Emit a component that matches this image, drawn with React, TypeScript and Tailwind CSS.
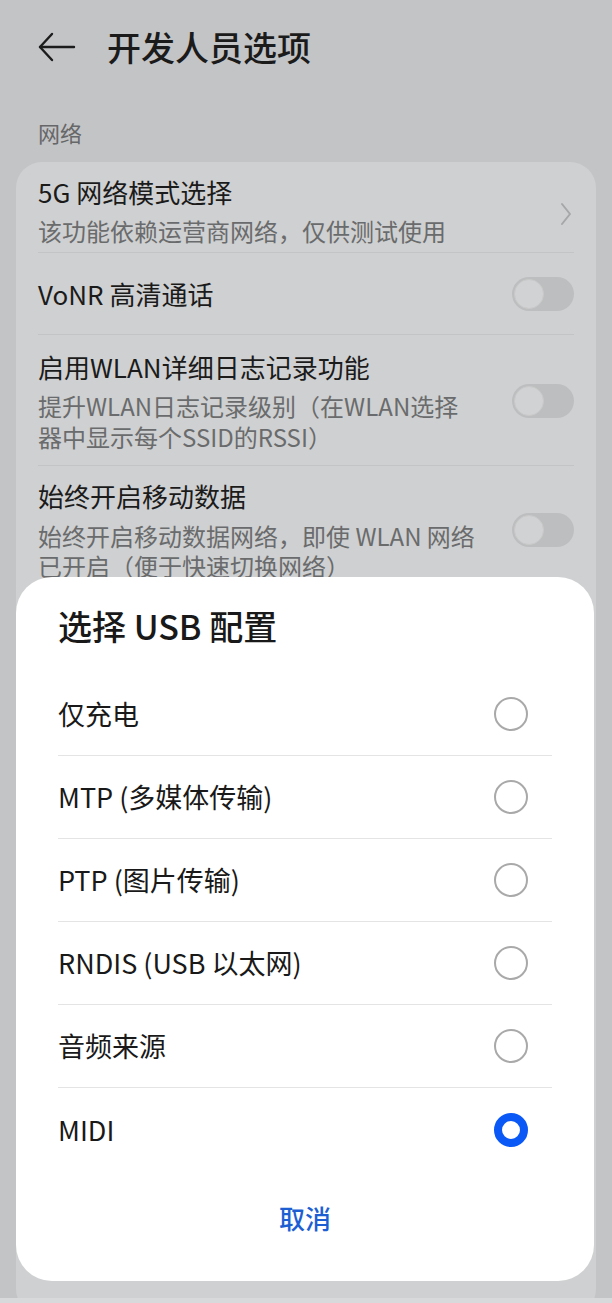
import React from "react";

const font = { fontFamily: '"Noto Sans CJK SC", "Noto Sans", sans-serif' };

function Toggle() {
  return (
    <div className="relative h-[34px] w-[62px] shrink-0 rounded-full bg-[#bdbebf]">
      <div className="absolute left-[2px] top-[2px] h-[30px] w-[30px] rounded-full border border-[#c9c9c9] bg-[#d1d2d3]" />
    </div>
  );
}

function Radio({ checked }: { checked?: boolean }) {
  if (checked) {
    return <div className="h-[34px] w-[34px] rounded-full border-[8px] border-[#0a59f7] bg-white" />;
  }
  return <div className="h-[34px] w-[34px] rounded-full border-2 border-[#a9a9a9] bg-white" />;
}

const options = ["仅充电", "MTP (多媒体传输)", "PTP (图片传输)", "RNDIS (USB 以太网)", "音频来源", "MIDI"];

export default function App() {
  return (
    <div className="relative h-[1303px] w-[612px] overflow-hidden bg-[#c3c4c6]" style={font}>
      {/* header */}
      <div className="flex h-[94px] items-center pl-[38px]">
        <svg width="38" height="30" viewBox="0 0 38 30" fill="none" stroke="#1c1c1c" strokeWidth="2.4" strokeLinecap="round" strokeLinejoin="round">
          <path d="M2 15H36" />
          <path d="M14 2L2 15L14 28" />
        </svg>
        <span className="ml-[31px] text-[34px] font-medium leading-[44px] text-[#1b1b1b]">开发人员选项</span>
      </div>

      <div className="mt-[23px] pl-[38px] text-[22px] leading-[30px] text-[#666768]">网络</div>

      {/* settings card */}
      <div className="mx-[16px] mt-[15px] rounded-[26px] bg-[#cfd0d1] px-[22px]">
        <div className="flex items-center justify-between border-b border-[#c3c4c5] pt-[13px] pb-[6px]">
          <div>
            <div className="text-[26px] leading-[34px] text-[#1b1b1b]">5G 网络模式选择</div>
            <div className="mt-[7px] text-[24px] leading-[30px] text-[#6a6b6c]">该功能依赖运营商网络，仅供测试使用</div>
          </div>
          <svg width="12" height="24" viewBox="0 0 12 24" fill="none" stroke="#a6a7a8" strokeWidth="2" strokeLinecap="round" strokeLinejoin="round" className="mr-[2px] mt-[6px]">
            <path d="M2 2L10 12L2 22" />
          </svg>
        </div>

        <div className="flex h-[82px] items-center justify-between border-b border-[#c3c4c5]">
          <div className="text-[26px] leading-[34px] text-[#1b1b1b]">VoNR 高清通话</div>
          <Toggle />
        </div>

        <div className="flex items-center justify-between border-b border-[#c3c4c5] pt-[15px] pb-[13px]">
          <div className="w-[441px]">
            <div className="text-[26px] leading-[34px] text-[#1b1b1b]">启用WLAN详细日志记录功能</div>
            <div className="mt-[6px] text-[24px] leading-[31px] text-[#6a6b6c]">
              提升WLAN日志记录级别（在WLAN选择器中显示每个SSID的RSSI）
            </div>
          </div>
          <Toggle />
        </div>

        <div className="flex items-center justify-between pt-[13px] pb-[14px]">
          <div className="w-[441px]">
            <div className="text-[26px] leading-[34px] text-[#1b1b1b]">始终开启移动数据</div>
            <div className="mt-[8px] text-[24px] leading-[30px] text-[#6a6b6c]">
              始终开启移动数据网络，即使 WLAN 网络已开启（便于快速切换网络）
            </div>
          </div>
          <Toggle />
        </div>
        <div className="h-[720px]" />
      </div>

      {/* dialog */}
      <div className="absolute left-[16px] top-[577px] h-[704px] w-[578px] rounded-[36px] bg-white px-[42px]">
        <div className="pt-[27px] text-[34px] font-medium leading-[44px] text-[#191919]">选择 USB 配置</div>
        <div className="mt-[25px]">
          {options.map((label, i) => (
            <div
              key={label}
              className={`flex h-[83px] items-center justify-between ${i < options.length - 1 ? "border-b border-[#e4e4e4]" : ""}`}
            >
              <span className="text-[27px] leading-[36px] text-[#191919]">{label}</span>
              <div className="mr-[24px]">
                <Radio checked={label === "MIDI"} />
              </div>
            </div>
          ))}
        </div>
        <div className="mt-[27px] text-center text-[26px] font-medium leading-[40px] text-[#1d5fd3]">取消</div>
      </div>

      <div className="absolute bottom-0 left-0 h-[5px] w-full bg-[#d8d9da]" />
    </div>
  );
}
